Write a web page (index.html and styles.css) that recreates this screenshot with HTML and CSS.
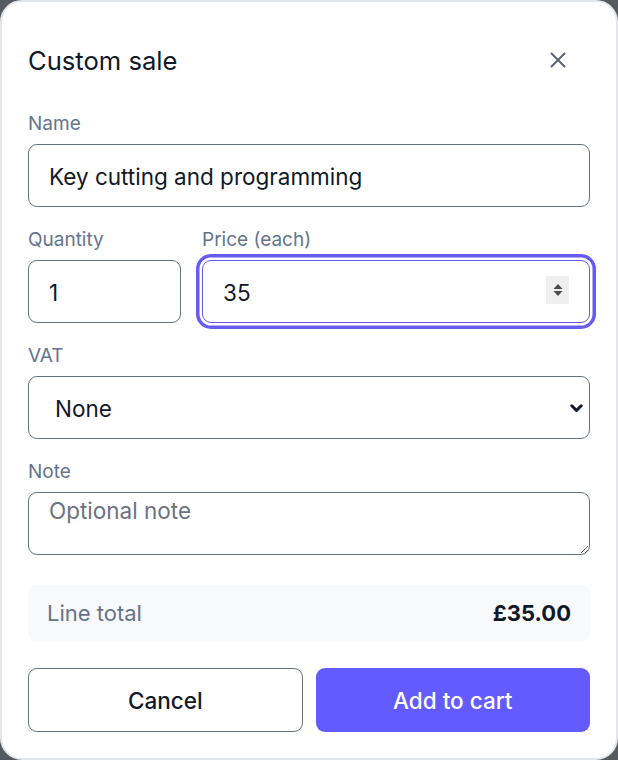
FILE: index.html
```html
<!DOCTYPE html>
<html lang="en">
<head>
<meta charset="utf-8">
<title>Custom sale</title>
<link rel="stylesheet" href="styles.css">
</head>
<body>
<div class="dialog">
  <div class="header">
    <h1 class="title">Custom sale</h1>
    <button class="close" aria-label="Close">
      <svg width="16" height="16" viewBox="0 0 16 16" fill="none" stroke="#5b6475" stroke-width="2" stroke-linecap="round"><path d="M1.5 1.5L14.5 14.5M14.5 1.5L1.5 14.5"/></svg>
    </button>
  </div>

  <div class="field">
    <label class="label">Name</label>
    <input class="input" type="text" value="Key cutting and programming">
  </div>

  <div class="row">
    <div class="field">
      <label class="label">Quantity</label>
      <input class="input" type="text" value="1">
    </div>
    <div class="field">
      <label class="label">Price (each)</label>
      <div class="focus-wrap">
        <input class="input focused" type="text" value="35">
        <span class="spinner">
          <svg width="10" height="16" viewBox="0 0 10 16"><path d="M5 2L9.5 7H0.5Z" fill="#4b4b4b"/><path d="M5 14L9.5 9H0.5Z" fill="#4b4b4b"/></svg>
        </span>
      </div>
    </div>
  </div>

  <div class="field">
    <label class="label">VAT</label>
    <div class="select-wrap">
      <select class="input select"><option>None</option></select>
      <svg class="chevron" width="13" height="9" viewBox="0 0 13 9" fill="none" stroke="#111827" stroke-width="3" stroke-linecap="round" stroke-linejoin="round"><path d="M1.8 1.8L6.5 6.5L11.2 1.8"/></svg>
    </div>
  </div>

  <div class="field">
    <label class="label">Note</label>
    <textarea class="input textarea" placeholder="Optional note"></textarea>
  </div>

  <div class="total">
    <span class="total-label">Line total</span>
    <span class="total-value">£35.00</span>
  </div>

  <div class="actions">
    <button class="btn btn-secondary">Cancel</button>
    <button class="btn btn-primary">Add to cart</button>
  </div>
</div>
</body>
</html>
```

FILE: styles.css
```css
* { box-sizing: border-box; }
html, body {
  margin: 0;
  padding: 0;
  width: 618px;
  height: 760px;
  background: #555a60;
  font-family: Inter, "Noto Sans", sans-serif;
  color: #111827;
}
.dialog {
  width: 618px;
  height: 760px;
  background: #ffffff;
  border: 2px solid #e3e7ec;
  border-radius: 22px;
  padding: 26px 26px 26px 26px;
  display: flex;
  flex-direction: column;
}
.header {
  height: 64px;
  display: flex;
  align-items: center;
  justify-content: space-between;
  margin-bottom: 21px;
}
.title {
  margin: 0;
  font-size: 25.6px;
  font-weight: 400;
  color: #111827;
}
.close {
  width: 64px;
  height: 64px;
  border: 0;
  background: transparent;
  display: flex;
  align-items: center;
  justify-content: center;
  padding: 0;
}
.field {
  display: flex;
  flex-direction: column;
  min-width: 0;
  margin-bottom: 22px;
}
.row .field { margin-bottom: 0; }
.row {
  display: grid;
  grid-template-columns: 153px 1fr;
  gap: 21px;
  margin-bottom: 22px;
}
.label {
  font-size: 19px;
  line-height: 22px;
  color: #64748b;
  margin-bottom: 9px;
}
.input {
  width: 100%;
  height: 63px;
  border: 1.5px solid #67727f;
  border-radius: 9px;
  padding: 2px 20px 0;
  font-family: Inter, "Noto Sans", sans-serif;
  font-size: 22.5px;
  color: #111827;
  background: #fff;
  outline: none;
}
.focus-wrap { position: relative; }
.focused {
  border-color: #665cf0;
  box-shadow: 0 0 0 2.5px #fff, 0 0 0 6px #665cf0;
}
.spinner {
  position: absolute;
  right: 21px;
  top: 16px;
  width: 23px;
  height: 28px;
  background: #efefef;
  display: flex;
  align-items: center;
  justify-content: center;
}
.select-wrap { position: relative; }
.select {
  appearance: none;
  -webkit-appearance: none;
  padding-left: 26px;
}
.chevron {
  position: absolute;
  right: 7px;
  top: 28px;
}
.textarea {
  resize: vertical;
  padding: 4px 20px;
  line-height: 28px;
  display: block;
}
.textarea::placeholder { color: #6b7280; }
.total {
  margin-top: 8px;
  height: 57px;
  background: #f8f9fb;
  border-radius: 8px;
  display: flex;
  align-items: center;
  justify-content: space-between;
  padding: 0 19px;
  font-size: 22px;
}
.total-label { color: #64748b; }
.total-value { font-weight: 700; color: #111827; }
.actions {
  margin-top: 27px;
  display: grid;
  grid-template-columns: 1fr 1fr;
  gap: 13px;
}
.btn {
  height: 64px;
  border-radius: 9px;
  font-family: Inter, "Noto Sans", sans-serif;
  font-size: 22.5px;
  font-weight: 500;
}
.btn-secondary {
  background: #fff;
  border: 1.5px solid #67727f;
  color: #111827;
}
.btn-primary {
  background: #635bff;
  border: 0;
  color: #fff;
}
```
